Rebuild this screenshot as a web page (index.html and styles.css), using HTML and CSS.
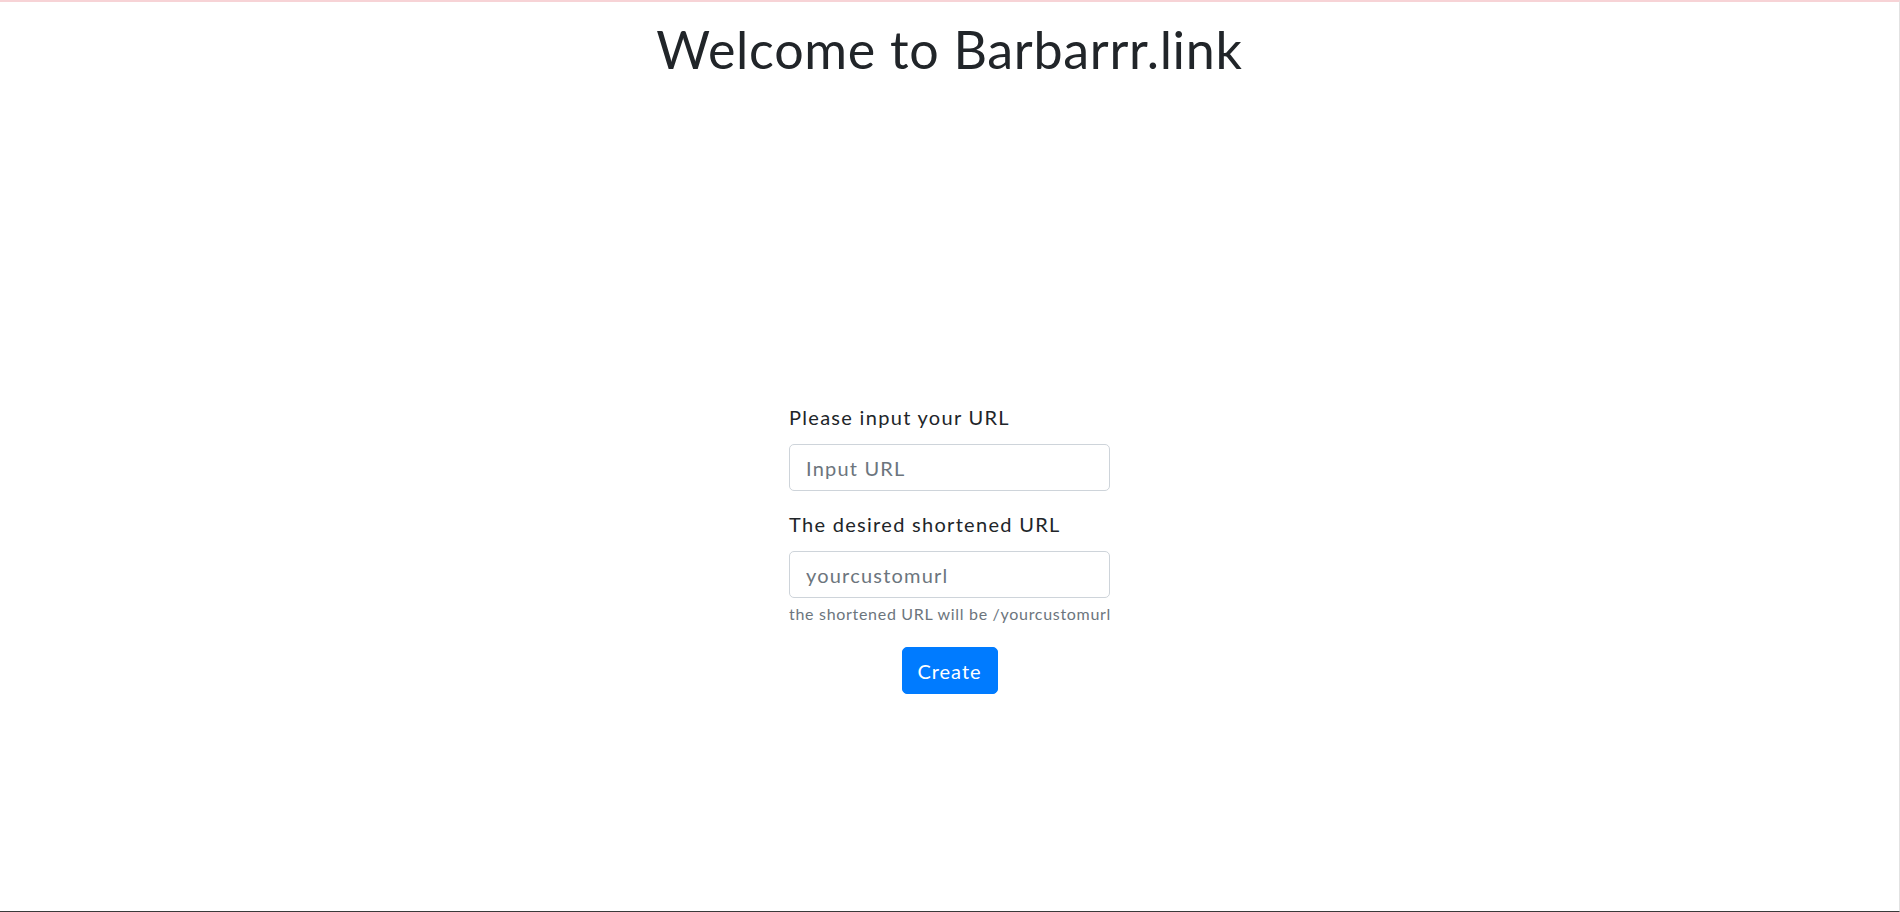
FILE: index.html
```html
<!DOCTYPE html>
<html lang="en">
<head>
<meta charset="utf-8">
<title>Barbarrr.link</title>
<link rel="stylesheet" href="styles.css">
</head>
<body>
<div class="page">
  <h1 class="title">Welcome to Barbarrr.link</h1>
  <form class="shorten-form">
    <div class="form-group">
      <label class="form-label" for="url">Please input your URL</label>
      <input class="form-input" id="url" type="text" placeholder="Input URL">
    </div>
    <div class="form-group">
      <label class="form-label" for="custom">The desired shortened URL</label>
      <input class="form-input" id="custom" type="text" placeholder="yourcustomurl">
      <small class="form-help">the shortened URL will be /yourcustomurl</small>
    </div>
    <div class="form-actions">
      <button class="btn-primary" type="button">Create</button>
    </div>
  </form>
</div>
</body>
</html>
```

FILE: styles.css
```css
html, body {
  margin: 0;
  padding: 0;
  background: #fff;
}

body {
  font-family: Lato, "Open Sans", sans-serif;
  color: #212529;
}

.page {
  box-sizing: border-box;
  height: 912px;
  border-top: 2px solid #f7d3d6;
  border-right: 1px solid #e2e2e2;
  border-bottom: 1px solid #3a3a3a;
  display: flex;
  flex-direction: column;
  align-items: center;
}

.title {
  margin: 16px 0 0;
  font-size: 52px;
  font-weight: 400;
  line-height: 1.2;
  letter-spacing: 0.7px;
  color: #212529;
}

.shorten-form {
  width: 321px;
  margin-top: 322px;
  display: flex;
  flex-direction: column;
}

.form-group {
  display: flex;
  flex-direction: column;
}

.form-group + .form-group {
  margin-top: 18px;
}

.form-label {
  font-size: 20px;
  line-height: 30px;
  letter-spacing: 1.3px;
  margin-bottom: 12px;
  color: #212529;
}

.form-input {
  box-sizing: border-box;
  width: 100%;
  height: 47px;
  padding: 0 16px;
  font-family: inherit;
  font-size: 20px;
  letter-spacing: 1.2px;
  color: #495057;
  background: #fff;
  border: 1px solid #ced4da;
  border-radius: 5px;
  outline: none;
}

.form-input::placeholder {
  color: #6c757d;
  opacity: 1;
}

.form-help {
  margin-top: 4px;
  font-size: 16px;
  line-height: 24px;
  letter-spacing: 0.7px;
  white-space: nowrap;
  color: #6c757d;
}

.form-actions {
  display: flex;
  justify-content: center;
  margin-top: 21px;
}

.btn-primary {
  box-sizing: border-box;
  width: 96px;
  height: 47px;
  padding: 0;
  font-family: inherit;
  font-size: 20px;
  letter-spacing: 1px;
  color: #fff;
  background: #007bff;
  border: 1px solid #007bff;
  border-radius: 5px;
  cursor: pointer;
}
```
